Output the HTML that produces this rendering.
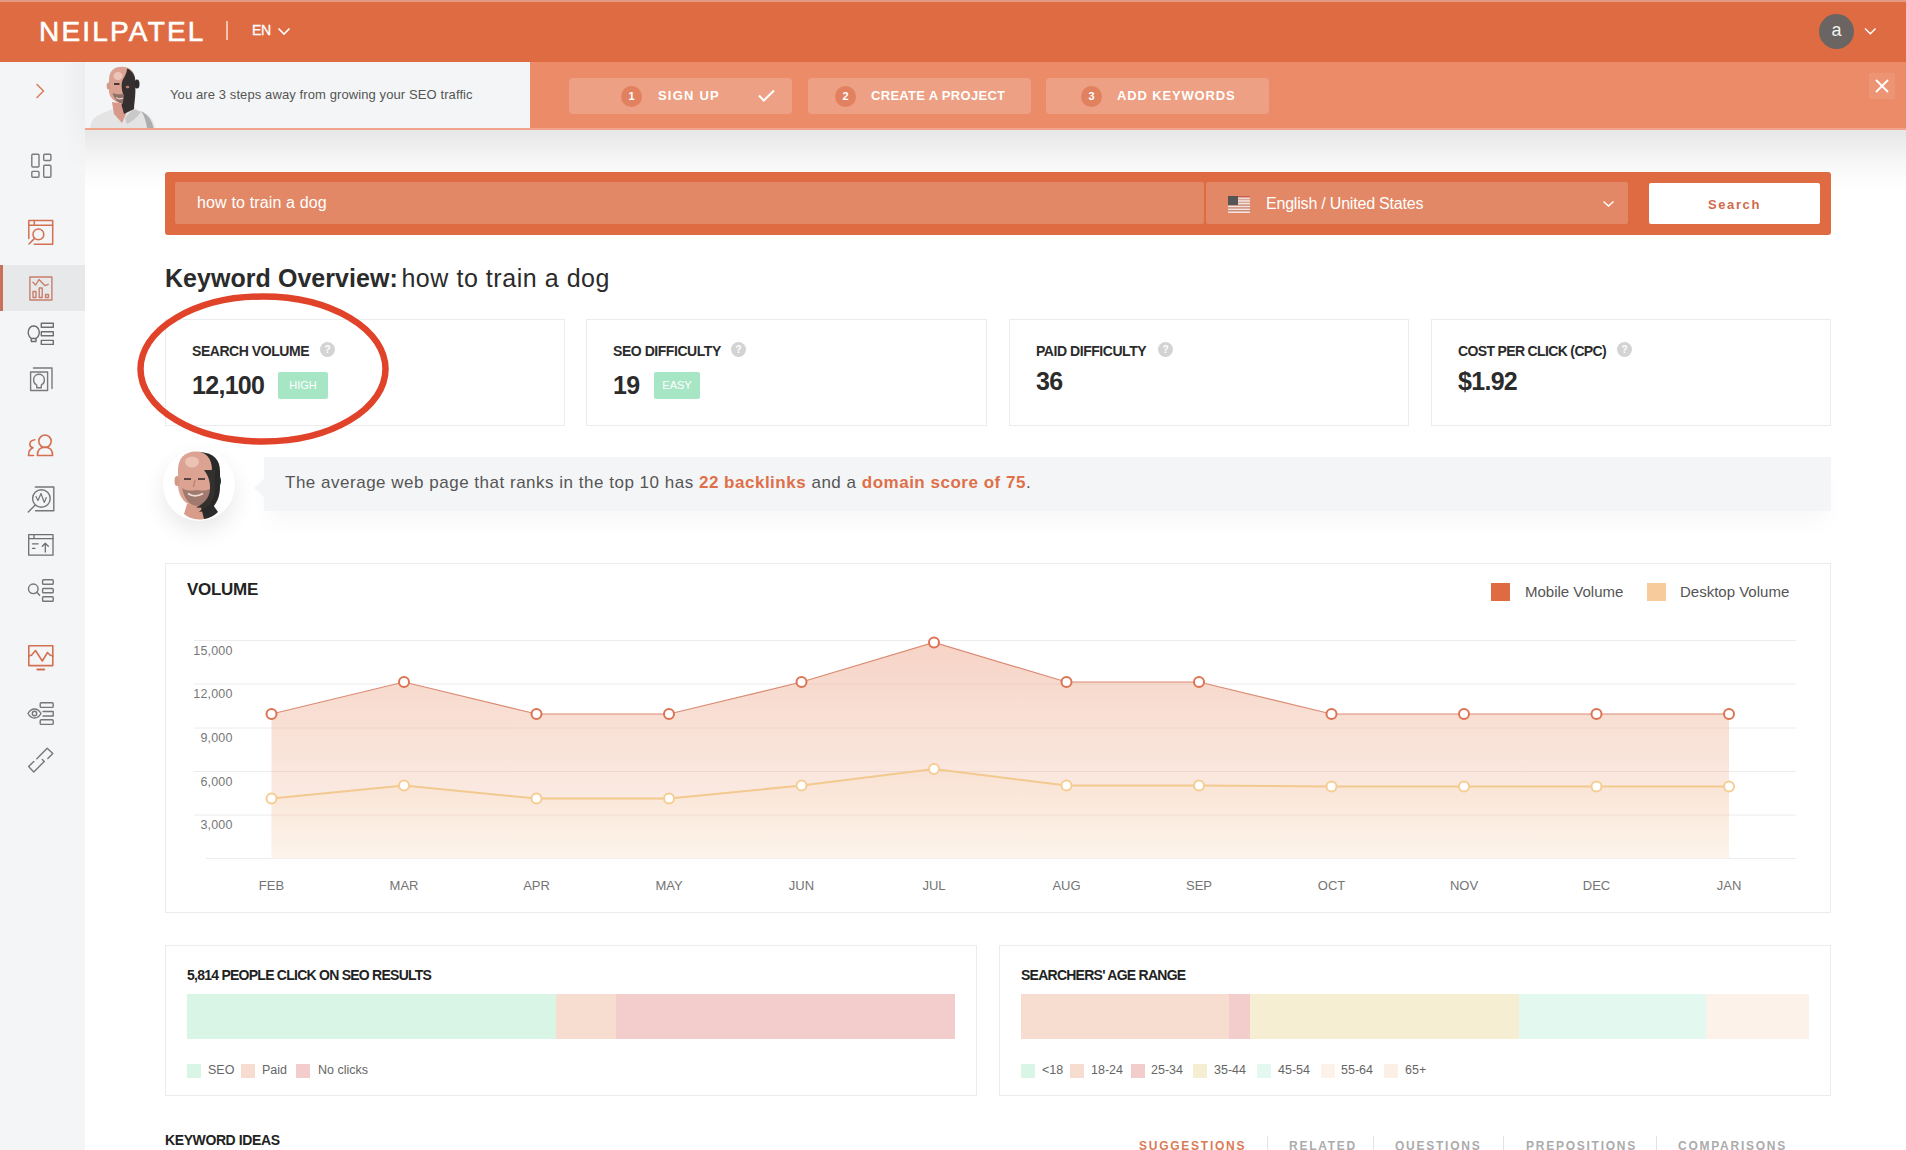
<!DOCTYPE html>
<html><head><meta charset="utf-8">
<style>
*{box-sizing:border-box;margin:0;padding:0}
html,body{width:1906px;height:1150px;overflow:hidden;background:#fff;font-family:"Liberation Sans",sans-serif;color:#333}
.abs{position:absolute}
#hdr{position:absolute;left:0;top:0;width:1906px;height:62px;background:#DE6B42}
#hdr .topline{position:absolute;left:0;top:0;width:1906px;height:2px;background:#E49A80}
#logo{position:absolute;left:39px;top:15px;font-size:28px;color:#fff;letter-spacing:2.2px;line-height:34px;font-weight:normal;-webkit-text-stroke:0.6px #fff}
#sb{position:absolute;left:0;top:62px;width:85px;height:1088px;background:#F4F5F7}
#banner{position:absolute;left:85px;top:62px;width:1821px;height:68px;background:#EB8B68}
#bwhite{position:absolute;left:0;top:0;width:445px;height:67px;background:#F4F5F7}
#bline{position:absolute;left:0;top:66px;width:1821px;height:1.5px;background:#F0A58A}
.step{position:absolute;top:16px;width:223px;height:36px;background:#EDA083;border-radius:4px}
.step .num{position:absolute;top:7.5px;width:21px;height:21px;border-radius:50%;background:#E2815F;color:#fff;font-size:11px;font-weight:bold;text-align:center;line-height:21px}
.step .lbl{position:absolute;top:9.5px;color:#fff;font-size:13px;font-weight:bold;letter-spacing:1.2px;line-height:15px}
#shadow{position:absolute;left:85px;top:129.5px;width:1821px;height:62px;background:linear-gradient(#E6E6E6 0%,#EDEDED 22%,#F6F6F6 50%,#FCFCFC 78%,#FFFFFF 100%)}
</style></head>
<body>
<div id="hdr"><div class="topline"></div>
  <div id="logo">NEILPATEL</div>
  <div class="abs" style="left:226px;top:21px;width:2px;height:19px;background:#F2C2AF"></div>
  <div class="abs" style="left:252px;top:22px;font-size:14px;color:#fff;font-weight:normal;-webkit-text-stroke:0.3px #fff;line-height:16px;letter-spacing:-0.3px">EN</div>
  <svg class="abs" style="left:277px;top:27px" width="14" height="9"><path d="M1.5 1.5 L7 7 L12.5 1.5" stroke="#fff" stroke-width="1.6" fill="none"/></svg>
  <div class="abs" style="left:1819px;top:14px;width:35px;height:35px;border-radius:50%;background:#6A6462;color:#F4F0EE;font-size:18px;text-align:center;line-height:33px">a</div>
  <svg class="abs" style="left:1864px;top:27px" width="13" height="9"><path d="M1 1.5 L6.3 6.8 L11.6 1.5" stroke="#fff" stroke-width="1.4" fill="none"/></svg>
</div>
<div id="sb"></div>
<div class="abs" style="left:62px;top:62px;width:23px;height:110px;background:linear-gradient(90deg,rgba(0,0,0,0),rgba(0,0,0,0.03));-webkit-mask-image:linear-gradient(#000 40%,transparent)"></div>
<div class="abs" style="left:0;top:265px;width:85px;height:46px;background:#E7E8E9"></div>
<div class="abs" style="left:0;top:265px;width:3px;height:46px;background:#C9705A"></div>
<svg class="abs" style="left:0;top:0" width="85" height="800" fill="none" stroke-linejoin="round" stroke-linecap="round">
 <path d="M37 84.5 L43.5 91 L37 97.5" stroke="#DA7A5C" stroke-width="1.5"/>
 <g stroke="#7A7A7A" stroke-width="1.4">
  <rect x="31.8" y="154.2" width="7.2" height="12.8" rx="1"/>
  <rect x="31.8" y="171.4" width="7.2" height="5.8" rx="1"/>
  <rect x="43.7" y="154.2" width="7.2" height="6.3" rx="1"/>
  <rect x="43.7" y="165.2" width="7.2" height="12" rx="1"/>
 </g>
 <g stroke="#D47052" stroke-width="1.5">
  <path d="M28.8 238.5 V220.5 H52.7 V244.2 H34.3"/>
  <path d="M28.8 225.3 H52.7 M34.3 220.5 V225.3"/>
  <circle cx="38.4" cy="234.4" r="5.4"/>
  <path d="M34.6 238.4 L29 244"/>
 </g>
 <g stroke="#C97E6C" stroke-width="1.4">
  <rect x="29.9" y="277" width="22" height="23"/>
  <path d="M32.9 282.3 L35.7 285 L39 279.5 L45 285.7 L48.2 284.3"/>
  <rect x="33" y="291.5" width="3" height="6"/>
  <rect x="39.2" y="288" width="3" height="9.5"/>
  <rect x="45.5" y="294.5" width="3" height="3"/>
 </g>
 <g stroke="#6E6E6E" stroke-width="1.4">
  <path d="M31.3 338.5 C28 336.5 28 332 28.5 330.5 C29.5 327 32 326 33.6 326 C35.5 326 38 327 39 330.5 C39.5 332 39.5 336.5 36 338.5 V341.5 H31.3 Z"/>
  <path d="M31.3 338.5 H36"/>
  <rect x="41.3" y="323.3" width="12" height="4"/>
  <rect x="41.3" y="331.8" width="12" height="4"/>
  <rect x="41.3" y="340.4" width="12" height="4"/>
 </g>
 <g stroke="#7A7A7A" stroke-width="1.4">
  <path d="M33.5 368 H52 V388.5"/>
  <rect x="30.6" y="372" width="17" height="18.5"/>
  <path d="M36.7 385 C34 383.5 33.5 380.5 33.7 379 C34 376 36.5 374.3 39 374.3 C41.5 374.3 44 376 44.3 379 C44.5 380.5 44 383.5 41.3 385 V387.8 H36.7 Z"/>
 </g>
 <g stroke="#D47052" stroke-width="1.6">
  <circle cx="45" cy="441.2" r="6.2"/>
  <path d="M37.4 455.5 C37.4 450 40.5 447.3 45 447.3 C49.5 447.3 52.6 450 52.6 455.5 Z"/>
  <path d="M34.8 439.8 C31.5 440.3 29.8 442.3 29.8 444.5 C29.8 446.3 31 447.3 33 447.8 C30 448.8 28.5 451.5 28.5 455.5 H33.5"/>
 </g>
 <g stroke="#767676" stroke-width="1.4">
  <path d="M35.3 487 H53.8 V510.8 H35.5"/>
  <circle cx="41.4" cy="498.5" r="8.8"/>
  <path d="M35 505.2 L28.3 512"/>
  <path d="M36 496.5 L38 500.5 L41 493.5 L44.3 502.5 L46.3 497.5" stroke-width="1.2"/>
 </g>
 <g stroke="#6E6E6E" stroke-width="1.3">
  <rect x="28.7" y="534.6" width="24.3" height="20.6"/>
  <path d="M28.7 538.6 H53 M34 534.6 V538.6"/>
  <path d="M32.4 543.8 H38.2 M32.4 548.3 H35"/>
  <path d="M45.3 552 V543.3 M42.3 546.2 L45.3 543.3 L48.3 546.2"/>
 </g>
 <g stroke="#767676" stroke-width="1.4">
  <circle cx="33.3" cy="588.8" r="4.8"/>
  <path d="M36.8 592.3 L39.6 595.3"/>
  <rect x="42.6" y="579.8" width="10.6" height="4.4" rx="0.8"/>
  <rect x="42.6" y="588.5" width="10.6" height="4.2" rx="0.8"/>
  <rect x="42.6" y="596.8" width="10.6" height="4.4" rx="0.8"/>
 </g>
 <g stroke="#D47052" stroke-width="1.6">
  <rect x="28.8" y="645.8" width="24" height="19.8"/>
  <path d="M28.8 656 L31.5 655.3 L35.5 650.5 L42.3 661 L47.5 652.5 L50 655 L52.8 656"/>
  <path d="M37.3 669.5 H44.3" stroke-width="1.8"/>
 </g>
 <g stroke="#767676" stroke-width="1.4">
  <path d="M28 713.5 C30 710 32 709 34.5 709 C37 709 39 710 41 713.5 C39 717 37 718 34.5 718 C32 718 30 717 28 713.5 Z"/>
  <circle cx="34.5" cy="713.5" r="2.2"/>
  <rect x="40.2" y="702.8" width="13" height="4.6" rx="1"/>
  <path d="M43 711.5 H53.2 V716 H43"/>
  <rect x="40.2" y="719.8" width="13" height="4.6" rx="1"/>
 </g>
 <g stroke="#777" stroke-width="1.4">
  <path d="M36.8 758.8 L47.2 748.2 L52.8 753.6 L47.8 758.6"/>
  <path d="M33.8 761.4 L28.6 766.6 L33.8 771.9 L44.3 761.4 L42.3 759.4"/>
 </g>
</svg>

<div id="shadow"></div>
<div id="banner">
  <div id="bwhite"></div>
  <div id="bline"></div>
<svg class="abs" style="left:0;top:0" width="80" height="67">
  <path d="M5 66 C6 58 10 54 18 51 L30 46 L49 46 L60 51 C66 54 69 59 70 66 Z" fill="#E4E4E4"/>
  <path d="M56 49 C63 53 67 58 68.5 66 L62 66 C61 59 59 53 56 49 Z" fill="#ADADAD"/>
  <path d="M48 47 L56 50 C52 56 46 60 42 62 L40 56 Z" fill="#C9C9C9"/>
  <path d="M27 40 L29 52 L37 61 L41 52 L40 42 Z" fill="#D9998A"/>
  <path d="M24 18 C24 9 29 4.8 37 4.8 C45 4.8 50.3 10 50.3 19 L50.3 30 C50.3 37 45 41 38 42 C31 41 25 37 24 30 Z" fill="#DBA293"/>
  <path d="M42 6.5 C47 8.5 50.3 13 50.3 19 L50.3 30 C50.3 37 49 42 49 47 L39 52 L36.5 43 C39 39 38.5 34 37.5 30 C36.5 26 36 20 38.5 16.5 C40.5 13 42 10 42 6.5 Z" fill="#35302F"/>
  <path d="M27.5 31 C29.5 38 33.5 41 37.5 41.5 L39 32 C35 32.5 31 32.5 27.5 31 Z" fill="#8F7068"/>
  <path d="M31 35.5 C33 37 36 37 38 36" stroke="#EAD6CE" stroke-width="1.2" fill="none"/>
  <ellipse cx="33" cy="14" rx="4.5" ry="4" fill="#EDC4B8"/>
  <path d="M29 22 H34.5" stroke="#4A3A36" stroke-width="2"/>
  <ellipse cx="42.5" cy="25" rx="1.8" ry="1.3" fill="#B87A6A"/>
  <ellipse cx="52" cy="22" rx="2.5" ry="4.5" fill="#2C2C2C"/>
  <ellipse cx="23.5" cy="24" rx="1.8" ry="3.5" fill="#D49A88"/>
</svg>

  <div class="abs" style="left:85px;top:25px;font-size:13px;color:#555;line-height:15px;letter-spacing:0.1px">You are 3 steps away from growing your SEO traffic</div>
  <div class="step" style="left:484px"><div class="num" style="left:52px">1</div><div class="lbl" style="left:89px">SIGN UP</div>
    <svg class="abs" style="left:189px;top:11px" width="17" height="14"><path d="M1 6.5 L5.8 11.5 L16 1.5" stroke="#fff" stroke-width="2" fill="none"/></svg></div>
  <div class="step" style="left:723px"><div class="num" style="left:27px">2</div><div class="lbl" style="left:63px;letter-spacing:0.3px">CREATE A PROJECT</div></div>
  <div class="step" style="left:961px"><div class="num" style="left:35px">3</div><div class="lbl" style="left:71px;letter-spacing:0.85px">ADD KEYWORDS</div></div>
  <div class="abs" style="left:1784px;top:11px;width:26px;height:26px;background:#EC9474"></div>
  <svg class="abs" style="left:1790px;top:17px" width="14" height="14"><path d="M1 1 L13 13 M13 1 L1 13" stroke="#fff" stroke-width="1.8"/></svg>
</div>

<div id="main">
  <div class="abs" style="left:165px;top:172px;width:1666px;height:63px;background:#DE6B42;border-radius:3px"></div>
  <div class="abs" style="left:175px;top:182px;width:1029px;height:42px;background:#E28866;border-radius:2px"></div>
  <div class="abs" style="left:197px;top:193px;font-size:16px;color:#fff;line-height:20px;letter-spacing:0.15px">how to train a dog</div>
  <div class="abs" style="left:1206px;top:182px;width:422px;height:42px;background:#E28866;border-radius:2px"></div>
  <svg class="abs" style="left:1228px;top:196px" width="22" height="17" viewBox="0 0 22 17">
    <rect width="22" height="17" fill="#F3E3DC"/>
    <rect y="0" width="22" height="1.4" fill="#C85A4A"/><rect y="2.8" width="22" height="1.4" fill="#D9A899"/><rect y="5.6" width="22" height="1.4" fill="#D9A899"/><rect y="8.4" width="22" height="1.4" fill="#C88A7A"/><rect y="11.2" width="22" height="1.4" fill="#C88A7A"/><rect y="14" width="22" height="1.4" fill="#C88A7A"/>
    <rect width="10" height="9" fill="#555"/>
  </svg>
  <div class="abs" style="left:1266px;top:194px;font-size:16px;color:#fff;line-height:20px;letter-spacing:-0.2px">English / United States</div>
  <svg class="abs" style="left:1602px;top:200px" width="13" height="8"><path d="M1.5 1.5 L6.5 6 L11.5 1.5" stroke="#fff" stroke-width="1.4" fill="none"/></svg>
  <div class="abs" style="left:1649px;top:183px;width:171px;height:41px;background:#fff;border-radius:2px"></div>
  <div class="abs" style="left:1649px;top:197px;width:171px;text-align:center;font-size:13px;font-weight:bold;color:#D2694A;letter-spacing:1.6px;line-height:15px">Search</div>

  <div class="abs" style="left:165px;top:263px;font-size:25px;color:#2B2B2B;line-height:30px;white-space:nowrap"><b style="letter-spacing:0.05px">Keyword Overview:</b><span style="letter-spacing:0.55px;margin-left:-4px"> how to train a dog</span></div>

  <style>
  .card{position:absolute;top:319px;height:107px;border:1px solid #EBECEE;background:#fff}
  .card .t{position:absolute;left:26px;top:23px;font-size:14px;font-weight:bold;color:#2B2B2B;line-height:16px;white-space:nowrap;letter-spacing:-0.45px}
  .card .q{position:absolute;top:22px;width:15px;height:15px;border-radius:50%;background:#D3D3D3;color:#fff;font-size:10px;font-weight:bold;text-align:center;line-height:15px}
  .card .v{position:absolute;left:26px;top:50px;font-size:25px;font-weight:bold;color:#2B2B2B;line-height:30px;white-space:nowrap;letter-spacing:-0.7px}
  .card .v2{top:46px}
  .badge{position:absolute;top:52px;height:27px;border-radius:2px;background:#A7E6C4;color:#fff;font-size:11px;text-align:center;line-height:27px}
  </style>
  <div class="card" style="left:165px;width:400px"><div class="t">SEARCH VOLUME</div><div class="q" style="left:154px">?</div><div class="v">12,100</div><div class="badge" style="left:112px;width:50px">HIGH</div></div>
  <div class="card" style="left:586px;width:401px"><div class="t">SEO DIFFICULTY</div><div class="q" style="left:144px">?</div><div class="v">19</div><div class="badge" style="left:67px;width:46px">EASY</div></div>
  <div class="card" style="left:1009px;width:400px"><div class="t">PAID DIFFICULTY</div><div class="q" style="left:148px">?</div><div class="v v2">36</div></div>
  <div class="card" style="left:1431px;width:400px"><div class="t" style="letter-spacing:-0.65px">COST PER CLICK (CPC)</div><div class="q" style="left:185px">?</div><div class="v v2">$1.92</div></div>
  <svg class="abs" style="left:130px;top:285px" width="270" height="170"><ellipse cx="133" cy="84" rx="122.5" ry="72.5" stroke="#E1432A" stroke-width="6.5" fill="none"/></svg>

  <div class="abs" style="left:264px;top:457px;width:1567px;height:54px;background:#F4F5F7;box-shadow:0 16px 22px -4px rgba(0,0,0,0.03)"></div>
  <div class="abs" style="left:254px;top:479px;width:0;height:0;border-top:9px solid transparent;border-bottom:9px solid transparent;border-right:10px solid #F4F5F7"></div>
  <div class="abs" style="left:285px;top:473px;font-size:17px;color:#555;line-height:19px;letter-spacing:0.51px;white-space:nowrap">The average web page that ranks in the top 10 has <b style="color:#DE7049">22 backlinks</b> and a <b style="color:#DE7049">domain score of 75</b>.</div>
  <div class="abs" style="left:163px;top:449px;width:72px;height:72px;border-radius:50%;background:#fff;box-shadow:0 10px 22px rgba(0,0,0,0.09)"></div>
  <svg class="abs" style="left:164px;top:450px" width="70" height="72">
    <path d="M20 64 L23 54 L44 54 L51 62 C47 67 41 69.5 35 69.5 C29 69.5 24 67 20 64 Z" fill="#D89C8A"/>
    <path d="M37 57 L47 52 L54 62 C50 66 45 68.5 40 69 Z" fill="#2B2B2B"/>
    <path d="M14 20 C14 8 21 1.5 32 1.5 C43 1.5 49 9 49 21 L49 36 C49 48 41 56 32 56 C22 56 15 48 14 36 Z" fill="#DCA392"/>
    <path d="M36 2 C44 4 48 10 48 21 L48 37 C48 46 46 53 40 57 L35 62 L46 60 C53 54 56 46 56 37 L56 21 C56 10 50 3 36 2 Z" fill="#292929"/>
        <path d="M18 38 C20 48 25 55 32 56 C39 56 45 50 47 38 C43 41 39 41 33 40 C27 41 22 41 18 38 Z" fill="#A07A6E"/>
    <path d="M24 43.5 C28 46.5 34 46.5 39 43.5" stroke="#EEDDD6" stroke-width="2" fill="none"/>
    <path d="M40 20 C44.5 26 46.5 32 46 40 C45 48 41 53 32 57.5 L42 58 C49 53 51 46 51 38 L51 20 Z" fill="#33302E"/>
    <ellipse cx="28" cy="12" rx="7" ry="5.5" fill="#EBC2B4"/>
    <path d="M20 29 H27 M34 29 H41" stroke="#5A4640" stroke-width="2"/>
    <path d="M31 30 L29.5 37" stroke="#B98070" stroke-width="1.2"/>
    <ellipse cx="13" cy="31" rx="2.5" ry="5" fill="#D49A88"/>
    <ellipse cx="54" cy="31" rx="3" ry="6" fill="#2A2A2A"/>
  </svg>


  <div class="abs" style="left:165px;top:563px;width:1666px;height:350px;border:1px solid #EBECEE;background:#fff"></div>
  <div class="abs" style="left:187px;top:580px;font-size:17px;font-weight:bold;color:#222;line-height:20px;letter-spacing:-0.3px">VOLUME</div>
  <div class="abs" style="left:1491px;top:583px;width:19px;height:18px;background:#DE6B42"></div>
  <div class="abs" style="left:1525px;top:583px;font-size:15px;color:#555;line-height:17px">Mobile Volume</div>
  <div class="abs" style="left:1647px;top:583px;width:19px;height:18px;background:#F7CB9B"></div>
  <div class="abs" style="left:1680px;top:583px;font-size:15px;color:#555;line-height:17px">Desktop Volume</div>
<svg class="abs" style="left:0;top:0" width="1906" height="1150">
<defs><clipPath id="cm"><polygon points="271.5,858.5 271.5,714 404.0,682 536.5,714 669.0,714 801.5,682 934.0,642.5 1066.5,682 1199.0,682 1331.5,714 1464.0,714 1596.5,714 1729.0,714 1729.0,858.5"/></clipPath><linearGradient id="gm" x1="0" y1="0" x2="0" y2="1"><stop offset="0" stop-color="#F2C0AC"/><stop offset="1" stop-color="#FBEDE4"/></linearGradient><linearGradient id="gd" x1="0" y1="0" x2="0" y2="1"><stop offset="0" stop-color="#F9E0CF"/><stop offset="1" stop-color="#FDF4EA"/></linearGradient></defs>
<line x1="194" y1="640.5" x2="1796" y2="640.5" stroke="#ECECEC" stroke-width="1"/>
<line x1="194" y1="684" x2="1796" y2="684" stroke="#ECECEC" stroke-width="1"/>
<line x1="194" y1="728" x2="1796" y2="728" stroke="#ECECEC" stroke-width="1"/>
<line x1="194" y1="771.5" x2="1796" y2="771.5" stroke="#ECECEC" stroke-width="1"/>
<line x1="194" y1="815" x2="1796" y2="815" stroke="#ECECEC" stroke-width="1"/>
<line x1="206" y1="858.5" x2="1796" y2="858.5" stroke="#ECECEC" stroke-width="1"/>
<polygon points="271.5,858.5 271.5,714 404.0,682 536.5,714 669.0,714 801.5,682 934.0,642.5 1066.5,682 1199.0,682 1331.5,714 1464.0,714 1596.5,714 1729.0,714 1729.0,858.5" fill="url(#gm)" opacity="0.68"/>
<polygon points="271.5,858.5 271.5,798.5 404.0,785.5 536.5,798.5 669.0,798.5 801.5,785.5 934.0,769 1066.5,785.5 1199.0,785.5 1331.5,786.5 1464.0,786.5 1596.5,786.5 1729.0,786.5 1729.0,858.5" fill="url(#gd)" opacity="0.7"/>
<line x1="271.5" y1="684" x2="1729" y2="684" stroke="#E9C9C0" stroke-width="1" opacity="0.35" clip-path="url(#cm)"/><line x1="271.5" y1="728" x2="1729" y2="728" stroke="#E9C9C0" stroke-width="1" opacity="0.35" clip-path="url(#cm)"/><line x1="271.5" y1="771.5" x2="1729" y2="771.5" stroke="#E9C9C0" stroke-width="1" opacity="0.35" clip-path="url(#cm)"/><line x1="271.5" y1="815" x2="1729" y2="815" stroke="#E9C9C0" stroke-width="1" opacity="0.35" clip-path="url(#cm)"/><polyline points="271.5,714 404.0,682 536.5,714 669.0,714 801.5,682 934.0,642.5 1066.5,682 1199.0,682 1331.5,714 1464.0,714 1596.5,714 1729.0,714" fill="none" stroke="#DC8A72" stroke-width="1.2"/>
<polyline points="271.5,798.5 404.0,785.5 536.5,798.5 669.0,798.5 801.5,785.5 934.0,769 1066.5,785.5 1199.0,785.5 1331.5,786.5 1464.0,786.5 1596.5,786.5 1729.0,786.5" fill="none" stroke="#F2C98E" stroke-width="2"/>
<circle cx="271.5" cy="714" r="5" fill="#fff" stroke="#DD7352" stroke-width="2"/>
<circle cx="404.0" cy="682" r="5" fill="#fff" stroke="#DD7352" stroke-width="2"/>
<circle cx="536.5" cy="714" r="5" fill="#fff" stroke="#DD7352" stroke-width="2"/>
<circle cx="669.0" cy="714" r="5" fill="#fff" stroke="#DD7352" stroke-width="2"/>
<circle cx="801.5" cy="682" r="5" fill="#fff" stroke="#DD7352" stroke-width="2"/>
<circle cx="934.0" cy="642.5" r="5" fill="#fff" stroke="#DD7352" stroke-width="2"/>
<circle cx="1066.5" cy="682" r="5" fill="#fff" stroke="#DD7352" stroke-width="2"/>
<circle cx="1199.0" cy="682" r="5" fill="#fff" stroke="#DD7352" stroke-width="2"/>
<circle cx="1331.5" cy="714" r="5" fill="#fff" stroke="#DD7352" stroke-width="2"/>
<circle cx="1464.0" cy="714" r="5" fill="#fff" stroke="#DD7352" stroke-width="2"/>
<circle cx="1596.5" cy="714" r="5" fill="#fff" stroke="#DD7352" stroke-width="2"/>
<circle cx="1729.0" cy="714" r="5" fill="#fff" stroke="#DD7352" stroke-width="2"/>
<circle cx="271.5" cy="798.5" r="5" fill="#fff" stroke="#F5CD93" stroke-width="2"/>
<circle cx="404.0" cy="785.5" r="5" fill="#fff" stroke="#F5CD93" stroke-width="2"/>
<circle cx="536.5" cy="798.5" r="5" fill="#fff" stroke="#F5CD93" stroke-width="2"/>
<circle cx="669.0" cy="798.5" r="5" fill="#fff" stroke="#F5CD93" stroke-width="2"/>
<circle cx="801.5" cy="785.5" r="5" fill="#fff" stroke="#F5CD93" stroke-width="2"/>
<circle cx="934.0" cy="769" r="5" fill="#fff" stroke="#F5CD93" stroke-width="2"/>
<circle cx="1066.5" cy="785.5" r="5" fill="#fff" stroke="#F5CD93" stroke-width="2"/>
<circle cx="1199.0" cy="785.5" r="5" fill="#fff" stroke="#F5CD93" stroke-width="2"/>
<circle cx="1331.5" cy="786.5" r="5" fill="#fff" stroke="#F5CD93" stroke-width="2"/>
<circle cx="1464.0" cy="786.5" r="5" fill="#fff" stroke="#F5CD93" stroke-width="2"/>
<circle cx="1596.5" cy="786.5" r="5" fill="#fff" stroke="#F5CD93" stroke-width="2"/>
<circle cx="1729.0" cy="786.5" r="5" fill="#fff" stroke="#F5CD93" stroke-width="2"/>
</svg>
  <div class="abs" style="left:150px;width:82.5px;text-align:right;letter-spacing:0.15px;top:642.5px;font-size:12.5px;color:#777;line-height:16px">15,000</div>
  <div class="abs" style="left:150px;width:82.5px;text-align:right;letter-spacing:0.15px;top:686px;font-size:12.5px;color:#777;line-height:16px">12,000</div>
  <div class="abs" style="left:150px;width:82.5px;text-align:right;letter-spacing:0.15px;top:730px;font-size:12.5px;color:#777;line-height:16px">9,000</div>
  <div class="abs" style="left:150px;width:82.5px;text-align:right;letter-spacing:0.15px;top:773.5px;font-size:12.5px;color:#777;line-height:16px">6,000</div>
  <div class="abs" style="left:150px;width:82.5px;text-align:right;letter-spacing:0.15px;top:817px;font-size:12.5px;color:#777;line-height:16px">3,000</div>
  <div class="abs" style="left:241.5px;width:60px;text-align:center;top:878px;font-size:13px;color:#747474;line-height:16px">FEB</div>
  <div class="abs" style="left:374.0px;width:60px;text-align:center;top:878px;font-size:13px;color:#747474;line-height:16px">MAR</div>
  <div class="abs" style="left:506.5px;width:60px;text-align:center;top:878px;font-size:13px;color:#747474;line-height:16px">APR</div>
  <div class="abs" style="left:639.0px;width:60px;text-align:center;top:878px;font-size:13px;color:#747474;line-height:16px">MAY</div>
  <div class="abs" style="left:771.5px;width:60px;text-align:center;top:878px;font-size:13px;color:#747474;line-height:16px">JUN</div>
  <div class="abs" style="left:904.0px;width:60px;text-align:center;top:878px;font-size:13px;color:#747474;line-height:16px">JUL</div>
  <div class="abs" style="left:1036.5px;width:60px;text-align:center;top:878px;font-size:13px;color:#747474;line-height:16px">AUG</div>
  <div class="abs" style="left:1169.0px;width:60px;text-align:center;top:878px;font-size:13px;color:#747474;line-height:16px">SEP</div>
  <div class="abs" style="left:1301.5px;width:60px;text-align:center;top:878px;font-size:13px;color:#747474;line-height:16px">OCT</div>
  <div class="abs" style="left:1434.0px;width:60px;text-align:center;top:878px;font-size:13px;color:#747474;line-height:16px">NOV</div>
  <div class="abs" style="left:1566.5px;width:60px;text-align:center;top:878px;font-size:13px;color:#747474;line-height:16px">DEC</div>
  <div class="abs" style="left:1699.0px;width:60px;text-align:center;top:878px;font-size:13px;color:#747474;line-height:16px">JAN</div>

  <div class="abs" style="left:165px;top:945px;width:812px;height:151px;border:1px solid #EBECEE;background:#fff"></div>
  <div class="abs" style="left:187px;top:967px;font-size:14px;font-weight:bold;color:#222;line-height:16px;letter-spacing:-0.75px;white-space:nowrap">5,814 PEOPLE CLICK ON SEO RESULTS</div>
  <div class="abs" style="left:187px;top:994px;width:369px;height:45px;background:#D9F5E6"></div>
  <div class="abs" style="left:556px;top:994px;width:60px;height:45px;background:#F7DDD0"></div>
  <div class="abs" style="left:616px;top:994px;width:339px;height:45px;background:#F2CDCB"></div>
  <div class="abs" style="left:187px;top:1064px;width:14px;height:14px;background:#D9F5E6"></div>
  <div class="abs" style="left:208px;top:1063px;font-size:12.5px;color:#666;line-height:15px">SEO</div>
  <div class="abs" style="left:241px;top:1064px;width:14px;height:14px;background:#F7DDD0"></div>
  <div class="abs" style="left:262px;top:1063px;font-size:12.5px;color:#666;line-height:15px">Paid</div>
  <div class="abs" style="left:296px;top:1064px;width:14px;height:14px;background:#F2CDCB"></div>
  <div class="abs" style="left:318px;top:1063px;font-size:12.5px;color:#666;line-height:15px">No clicks</div>

  <div class="abs" style="left:999px;top:945px;width:832px;height:151px;border:1px solid #EBECEE;background:#fff"></div>
  <div class="abs" style="left:1021px;top:967px;font-size:14px;font-weight:bold;color:#222;line-height:16px;letter-spacing:-0.75px;white-space:nowrap">SEARCHERS' AGE RANGE</div>
  <div class="abs" style="left:1021px;top:994px;width:208px;height:45px;background:#F7DDD0"></div>
  <div class="abs" style="left:1229px;top:994px;width:21px;height:45px;background:#F2CDCB"></div>
  <div class="abs" style="left:1250px;top:994px;width:269px;height:45px;background:#F6EED3"></div>
  <div class="abs" style="left:1519px;top:994px;width:187px;height:45px;background:#E3F8EF"></div>
  <div class="abs" style="left:1706px;top:994px;width:103px;height:45px;background:#FCF2E9"></div>
  <div class="abs" style="left:1021px;top:1064px;width:14px;height:14px;background:#D9F5E6"></div>
  <div class="abs" style="left:1042px;top:1063px;font-size:12.5px;color:#666;line-height:15px">&lt;18</div>
  <div class="abs" style="left:1070px;top:1064px;width:14px;height:14px;background:#F7DDD0"></div>
  <div class="abs" style="left:1091px;top:1063px;font-size:12.5px;color:#666;line-height:15px">18-24</div>
  <div class="abs" style="left:1131px;top:1064px;width:14px;height:14px;background:#F2CDCB"></div>
  <div class="abs" style="left:1151px;top:1063px;font-size:12.5px;color:#666;line-height:15px">25-34</div>
  <div class="abs" style="left:1193px;top:1064px;width:14px;height:14px;background:#F6EED3"></div>
  <div class="abs" style="left:1214px;top:1063px;font-size:12.5px;color:#666;line-height:15px">35-44</div>
  <div class="abs" style="left:1257px;top:1064px;width:14px;height:14px;background:#E3F8EF"></div>
  <div class="abs" style="left:1278px;top:1063px;font-size:12.5px;color:#666;line-height:15px">45-54</div>
  <div class="abs" style="left:1321px;top:1064px;width:14px;height:14px;background:#FCF2E9"></div>
  <div class="abs" style="left:1341px;top:1063px;font-size:12.5px;color:#666;line-height:15px">55-64</div>
  <div class="abs" style="left:1384px;top:1064px;width:14px;height:14px;background:#FBEFE6"></div>
  <div class="abs" style="left:1405px;top:1063px;font-size:12.5px;color:#666;line-height:15px">65+</div>

  <div class="abs" style="left:165px;top:1132px;font-size:14px;font-weight:bold;color:#222;line-height:16px;letter-spacing:-0.4px;white-space:nowrap">KEYWORD IDEAS</div>
  <div class="abs" style="left:1139px;top:1138px;font-size:12px;font-weight:bold;color:#DB7A55;line-height:16px;letter-spacing:1.75px;white-space:nowrap">SUGGESTIONS</div>
  <div class="abs" style="left:1289px;top:1138px;font-size:12px;font-weight:bold;color:#ABABAB;line-height:16px;letter-spacing:1.75px;white-space:nowrap">RELATED</div>
  <div class="abs" style="left:1395px;top:1138px;font-size:12px;font-weight:bold;color:#ABABAB;line-height:16px;letter-spacing:1.75px;white-space:nowrap">QUESTIONS</div>
  <div class="abs" style="left:1526px;top:1138px;font-size:12px;font-weight:bold;color:#ABABAB;line-height:16px;letter-spacing:1.75px;white-space:nowrap">PREPOSITIONS</div>
  <div class="abs" style="left:1678px;top:1138px;font-size:12px;font-weight:bold;color:#ABABAB;line-height:16px;letter-spacing:1.75px;white-space:nowrap">COMPARISONS</div>
  <div class="abs" style="left:1267px;top:1136px;width:1px;height:14px;background:#E3E3E3"></div>
  <div class="abs" style="left:1373px;top:1136px;width:1px;height:14px;background:#E3E3E3"></div>
  <div class="abs" style="left:1503px;top:1136px;width:1px;height:14px;background:#E3E3E3"></div>
  <div class="abs" style="left:1656px;top:1136px;width:1px;height:14px;background:#E3E3E3"></div>
</div>
</body></html>
